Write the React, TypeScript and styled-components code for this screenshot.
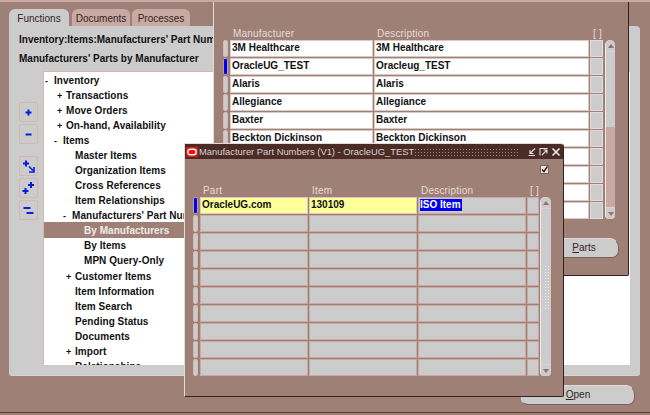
import { Fragment } from "react";
import styled, { createGlobalStyle } from "styled-components";

const BROWN = "#9f8077";
const PINK = "#c9a9a3";
const GREY = "#cccccc";

const GlobalStyle = createGlobalStyle`
  html, body { margin: 0; padding: 0; background: ${BROWN}; }
  body { font-family: "Liberation Sans", Arial, sans-serif; font-size: 10px; overflow: hidden; }
`;

const Desktop = styled.div`
  position: relative;
  width: 650px;
  height: 413px;
  overflow: hidden;
  background: ${BROWN};
  border-top: 2px solid ${PINK};
  border-bottom: 1px solid #5a3f3a;
  box-sizing: border-box;
`;

/* windows on the desktop */
const Navigator = styled.div`
  position: absolute;
  left: 9px;
  top: 7px;
  width: 631px;
  display: flex;
  flex-direction: column;
`;

const Tabs = styled.div`
  display: flex;
  gap: 2px;
  height: 17px;
`;

const Tab = styled.div<{ $active?: boolean }>`
  width: ${({ $active }) => ($active ? "60px" : "58px")};
  margin-right: ${({ $active }) => ($active ? "1px" : "0")};
  background: ${({ $active }) => ($active ? GREY : PINK)};
  border-radius: 6px 6px 0 0;
  color: #332522;
  line-height: 19px;
  text-align: center;
`;

const Panel = styled.div`
  height: 350px;
  background: ${GREY};
  border-bottom: 1px solid #dcd0cd;
  border-radius: 0 4px 3px 3px;
  box-sizing: border-box;
  padding: 4px 10px 10px 10px;
  display: flex;
  flex-direction: column;
`;

const Heading = styled.div`
  width: 194px;
  overflow: hidden;
  font-weight: bold;
  line-height: 19px;
  height: 19px;
  color: #111;
  white-space: nowrap;
`;

const PanelBody = styled.div`
  display: flex;
  margin-top: 3px;
  flex: 1;
  min-height: 0;
`;

const Tools = styled.div`
  width: 24px;
  display: flex;
  flex-direction: column;
  padding-top: 31px;
`;

const ToolButton = styled.div<{ $gap?: number }>`
  width: 19px;
  height: 20px;
  margin-top: ${({ $gap }) => $gap ?? 2}px;
  box-sizing: border-box;
  border: 1px solid #d3b9b4;
  border-radius: 2px;
  display: flex;
  align-items: center;
  justify-content: center;
`;

const Tree = styled.div`
  width: 587px;
  height: 294px;
  background: #fff;
  border-left: 1px solid #d3b9b4;
  border-top: 1px solid #d3b9b4;
  box-sizing: border-box;
  overflow: hidden;
  padding-top: 1px;
`;

const TreeRow = styled.div<{ $indent: number; $selected?: boolean; $push?: boolean }>`
  width: 140px;
  height: 15px;
  line-height: 15px;
  margin-top: ${({ $push }) => ($push ? "1px" : "0")};
  padding-left: ${({ $indent }) => $indent}px;
  font-weight: bold;
  letter-spacing: 0.05px;
  white-space: nowrap;
  overflow: hidden;
  color: ${({ $selected }) => ($selected ? "#f2ece9" : "#111")};
  background: ${({ $selected }) => ($selected ? BROWN : "transparent")};
  box-shadow: ${({ $selected }) => ($selected ? `0 -1px 0 ${BROWN}` : "none")};
`;

const TreeMark = styled.span`
  display: inline-block;
  width: 9px;
  margin-left: -9px;
  font-size: 9px;
`;

const Footer = styled.div<{ $pad: string }>`
  display: flex;
  justify-content: flex-end;
  padding: ${({ $pad }) => $pad};
`;

const PushButton = styled.div<{ $width: number }>`
  width: ${({ $width }) => $width}px;
  height: 20px;
  box-sizing: border-box;
  background: ${GREY};
  border-top: 1px solid #e2d8d5;
  border-left: 1px solid #e2d8d5;
  border-right: 1px solid #7c605a;
  border-bottom: 1px solid #7c605a;
  border-radius: 5px 9px 7px 7px;
  color: #332522;
  line-height: 18px;
  text-align: center;
  u { text-decoration: underline; }
`;

const Window = styled.div<{ $left: number; $top: number; $width: number; $height: number; $raised?: boolean }>`
  position: absolute;
  left: ${({ $left }) => $left}px;
  top: ${({ $top }) => $top}px;
  width: ${({ $width }) => $width}px;
  height: ${({ $height }) => $height}px;
  box-sizing: border-box;
  background: ${BROWN};
  border-top: ${({ $raised }) => ($raised ? "1px solid #e4dbd8" : "none")};
  border-left: 1px solid #e4dbd8;
  border-right: 1px solid #33221f;
  border-bottom: 1px solid #33221f;
  border-radius: ${({ $raised }) => ($raised ? "0 4px 2px 0" : "0 0 2px 0")};
  display: flex;
  flex-direction: column;
`;

const RedSliver = styled.div`
  position: absolute;
  left: 2px;
  top: -2px;
  width: 12px;
  height: 2px;
  background: #e81a12;
`;

const MainBody = styled.div`
  padding: 26px 0 0 9px;
  display: flex;
  flex-direction: column;
`;

const PopupBody = styled.div`
  padding: 6px 0 0 8px;
  display: flex;
  flex-direction: column;
`;

const HeaderRow = styled.div<{ $columns: string }>`
  display: grid;
  grid-template-columns: ${({ $columns }) => $columns};
  column-gap: 1px;
  height: 12px;
  line-height: 12px;
  color: #e6dcd9;
  letter-spacing: 0.2px;
`;

const HeaderCell = styled.div`
  padding-left: 3px;
  white-space: nowrap;
`;

const TableWrap = styled.div`
  display: flex;
  align-items: stretch;
`;

const Table = styled.div<{ $columns: string }>`
  display: grid;
  grid-template-columns: ${({ $columns }) => $columns};
  grid-auto-rows: 17px;
  gap: 1px;
`;

const Indicator = styled.div<{ $on?: boolean }>`
  margin: 0 1px 0 0;
  border: 1px solid ${({ $on }) => ($on ? "#b89c96" : "#d3b9b4")};
  background: ${({ $on }) => ($on ? "#0000f0" : GREY)};
  border-radius: 2px;
`;

const Cell = styled.div<{ $fill?: string; $edge?: string }>`
  box-sizing: border-box;
  background: ${({ $fill }) => $fill ?? "#fff"};
  border: 1px solid ${({ $edge }) => $edge ?? "#dbc9c5"};
  padding-left: 1px;
  font-weight: bold;
  line-height: 14px;
  color: #111;
  white-space: nowrap;
  overflow: hidden;
`;

const Highlighted = styled.span`
  display: inline-block;
  background: #0000f0;
  color: #fff;
  padding-right: 1px;
  line-height: 12px;
`;

const ScrollBar = styled.div<{ $left: number; $width: number }>`
  position: relative;
  margin-left: ${({ $left }) => $left}px;
  width: ${({ $width }) => $width}px;
  box-sizing: border-box;
  border-left: 1px solid #f0ebe9;
  background: ${GREY};
  border-radius: 5px 5px 4px 4px;
  display: flex;
  flex-direction: column;
  align-items: center;
  justify-content: space-between;
  overflow: hidden;
`;

const ScrollEnd = styled.div<{ $bottom?: boolean }>`
  width: 100%;
  height: 11px;
  flex: none;
  background: ${GREY};
  border-${({ $bottom }) => ($bottom ? "top" : "bottom")}: 1px solid #dcd2cf;
  display: flex;
  align-items: center;
  justify-content: center;
  &::before {
    content: "";
    border-left: 3px solid transparent;
    border-right: 3px solid transparent;
    border-${({ $bottom }) => ($bottom ? "top" : "bottom")}: 4px solid #8f736c;
  }
`;

const ScrollTrack = styled.div<{ $tall: number }>`
  width: 100%;
  height: ${({ $tall }) => $tall}px;
  flex: none;
`;

const ScrollRest = styled.div`
  flex: 1;
  width: 100%;
  background: ${PINK};
`;

const Grip = styled.div`
  flex: 1;
  width: 100%;
  display: flex;
  align-items: center;
  justify-content: center;
  &::before {
    content: "";
    width: 5px;
    height: 44px;
    background-image: radial-gradient(circle, #f2eeed 0.8px, transparent 1px);
    background-size: 3px 3px;
  }
`;

const TitleBar = styled.div`
  height: 15px;
  flex: none;
  background: #4a2c27;
  border-radius: 0 3px 0 0;
  display: flex;
  align-items: center;
  padding: 0 2px 0 1px;
  font-size: 9.4px;
  color: #dcd0cd;
  white-space: nowrap;
`;

const TitleText = styled.span`
  margin-left: 1px;
  width: 215px;
  overflow: hidden;
`;

const TitleDots = styled.div`
  width: 104px;
  height: 8px;
  background-image: radial-gradient(circle, #9c857f 0.7px, transparent 0.9px);
  background-size: 3px 3px;
`;

const TitleButtons = styled.div`
  display: flex;
  gap: 2px;
  margin-left: 9px;
`;

const CheckRow = styled.div`
  display: flex;
  justify-content: flex-end;
  height: 9px;
  padding-right: 14px;
  margin-bottom: 11px;
`;

const CheckBox = styled.div`
  width: 9px;
  height: 9px;
  background: #ece6e4;
  border: 1px solid #7c605a;
  box-sizing: border-box;
  display: flex;
`;

const OracleMark = () => (
  <svg width="12" height="10" viewBox="0 0 12 10">
    <rect width="12" height="10" fill="#e8130e" />
    <rect x="1.7" y="2.3" width="8.6" height="5.4" rx="2.7" fill="none" stroke="#fff" strokeWidth="1.4" />
  </svg>
);

const Plus = ({ x, y, s = 3 }: { x: number; y: number; s?: number }) => (
  <path d={`M${x - s} ${y}H${x + s}M${x} ${y - s}V${y + s}`} stroke="#0a1be0" strokeWidth="2" fill="none" />
);

const Minus = ({ x, y, s = 3 }: { x: number; y: number; s?: number }) => (
  <path d={`M${x - s} ${y}H${x + s}`} stroke="#0a1be0" strokeWidth="2" fill="none" />
);

const ToolIcon = ({ kind }: { kind: string }) => (
  <svg width="15" height="15" viewBox="0 0 15 15">
    {kind === "expand" && <Plus x={7.5} y={7.5} />}
    {kind === "collapse" && <Minus x={7.5} y={7.5} />}
    {kind === "branch" && (
      <>
        <Plus x={5} y={4.5} />
        <path d="M8 7.5L12 11.5M13 8V13H8" stroke="#0a1be0" strokeWidth="1.6" fill="none" />
      </>
    )}
    {kind === "all" && (
      <>
        <Plus x={10} y={4} />
        <Plus x={4.5} y={10} />
      </>
    )}
    {kind === "none" && (
      <>
        <Minus x={6} y={5} s={3.5} />
        <Minus x={9} y={10} s={3.5} />
      </>
    )}
  </svg>
);

const MinimizeIcon = () => (
  <svg width="10" height="10" viewBox="0 0 10 10" fill="none" stroke="#e6dcd9" strokeWidth="1.1">
    <path d="M8 1.5L3.5 6M1.5 8.5H8M3 3V6.5H6.5" />
  </svg>
);

const MaximizeIcon = () => (
  <svg width="10" height="10" viewBox="0 0 10 10" fill="none" stroke="#e6dcd9" strokeWidth="1.1">
    <path d="M1 8.5V1.5H8.5M3 8L8 3M4.5 3H8V6.5" />
  </svg>
);

const CloseIcon = () => (
  <svg width="10" height="10" viewBox="0 0 10 10" fill="none" stroke="#f2ecea" strokeWidth="1.6">
    <path d="M1.5 1.5L8.5 8.5M8.5 1.5L1.5 8.5" />
  </svg>
);

const treeItems: { label: string; indent: number; mark?: string; selected?: boolean; push?: boolean }[] = [
  { label: "Inventory", indent: 10, mark: "-" },
  { label: "Transactions", indent: 22, mark: "+" },
  { label: "Move Orders", indent: 22, mark: "+" },
  { label: "On-hand, Availability", indent: 22, mark: "+" },
  { label: "Items", indent: 19, mark: "-" },
  { label: "Master Items", indent: 31 },
  { label: "Organization Items", indent: 31 },
  { label: "Cross References", indent: 31 },
  { label: "Item Relationships", indent: 31 },
  { label: "Manufacturers' Part Numbers", indent: 28, mark: "-" },
  { label: "By Manufacturers", indent: 40, selected: true },
  { label: "By Items", indent: 40 },
  { label: "MPN Query-Only", indent: 40 },
  { label: "Customer Items", indent: 31, mark: "+", push: true },
  { label: "Item Information", indent: 31 },
  { label: "Item Search", indent: 31 },
  { label: "Pending Status", indent: 31 },
  { label: "Documents", indent: 31 },
  { label: "Import", indent: 31, mark: "+" },
  { label: "Relationships", indent: 31 },
];

const manufacturers = [
  ["3M Healthcare", "3M Healthcare"],
  ["OracleUG_TEST", "Oracleug_TEST"],
  ["Alaris", "Alaris"],
  ["Allegiance", "Allegiance"],
  ["Baxter", "Baxter"],
  ["Beckton Dickinson", "Beckton Dickinson"],
  ["", ""],
  ["", ""],
  ["", ""],
  ["", ""],
];

const MAIN_COLUMNS = "6px 143px 215px 13px";
const PART_COLUMNS = "6px 108px 108px 108px 12px";

export default function App() {
  return (
    <Desktop>
      <GlobalStyle />
      <Navigator>
        <Tabs>
          <Tab $active>Functions</Tab>
          <Tab>Documents</Tab>
          <Tab>Processes</Tab>
        </Tabs>
        <Panel>
          <Heading>Inventory:Items:Manufacturers' Part Numbers</Heading>
          <Heading>Manufacturers' Parts by Manufacturer</Heading>
          <PanelBody>
            <Tools>
              <ToolButton $gap={0}><ToolIcon kind="expand" /></ToolButton>
              <ToolButton><ToolIcon kind="collapse" /></ToolButton>
              <ToolButton $gap={12}><ToolIcon kind="branch" /></ToolButton>
              <ToolButton><ToolIcon kind="all" /></ToolButton>
              <ToolButton><ToolIcon kind="none" /></ToolButton>
            </Tools>
            <Tree>
              {treeItems.map((item) => (
                <TreeRow key={item.label} $indent={item.indent} $selected={item.selected} $push={item.push}>
                  {item.mark && <TreeMark>{item.mark}</TreeMark>}
                  {item.label}
                </TreeRow>
              ))}
            </Tree>
          </PanelBody>
        </Panel>
        <Footer $pad="9px 5px 0 0">
          <PushButton $width={114}><u>O</u>pen</PushButton>
        </Footer>
      </Navigator>

      <Window $left={213} $top={0} $width={416} $height={274}>
        <RedSliver />
        <MainBody>
          <HeaderRow $columns={MAIN_COLUMNS}>
            <span />
            <HeaderCell>Manufacturer</HeaderCell>
            <HeaderCell>Description</HeaderCell>
            <HeaderCell>[ ]</HeaderCell>
          </HeaderRow>
          <TableWrap>
            <Table $columns={MAIN_COLUMNS}>
              {manufacturers.map(([name, desc], i) => (
                <Fragment key={i}>
                  <Indicator $on={i === 1} />
                  <Cell>{name}</Cell>
                  <Cell>{desc}</Cell>
                  <Cell $fill={GREY} $edge="#e4dbd8" />
                </Fragment>
              ))}
            </Table>
            <ScrollBar $left={2} $width={10}>
              <ScrollEnd />
              <ScrollTrack $tall={75} />
              <ScrollRest />
              <ScrollEnd $bottom />
            </ScrollBar>
          </TableWrap>
        </MainBody>
        <Footer $pad="19px 9px 0 0">
          <PushButton $width={70}><u>P</u>arts</PushButton>
        </Footer>
      </Window>

      <Window $left={184} $top={141} $width={380} $height={254} $raised>
        <TitleBar>
          <OracleMark />
          <TitleText>Manufacturer Part Numbers (V1) - OracleUG_TEST</TitleText>
          <TitleDots />
          <TitleButtons>
            <MinimizeIcon />
            <MaximizeIcon />
            <CloseIcon />
          </TitleButtons>
        </TitleBar>
        <PopupBody>
          <CheckRow>
            <CheckBox>
              <svg width="7" height="7" viewBox="0 0 7 7" fill="none" stroke="#2a1a18" strokeWidth="1.5">
                <path d="M1 3.5L3 5.5L6.5 0.5" />
              </svg>
            </CheckBox>
          </CheckRow>
          <HeaderRow $columns={PART_COLUMNS}>
            <span />
            <HeaderCell>Part</HeaderCell>
            <HeaderCell>Item</HeaderCell>
            <HeaderCell>Description</HeaderCell>
            <HeaderCell>[ ]</HeaderCell>
          </HeaderRow>
          <TableWrap>
            <Table $columns={PART_COLUMNS}>
              {Array.from({ length: 10 }, (_, i) => (
                <Fragment key={i}>
                  <Indicator $on={i === 0} />
                  <Cell $fill={i === 0 ? "#ffff99" : GREY} $edge={i === 0 ? "#dbc9c5" : PINK}>{i === 0 && "OracleUG.com"}</Cell>
                  <Cell $fill={i === 0 ? "#ffff99" : GREY} $edge={i === 0 ? "#dbc9c5" : PINK}>{i === 0 && "130109"}</Cell>
                  <Cell $fill={GREY} $edge={PINK}>{i === 0 && <Highlighted>ISO Item</Highlighted>}</Cell>
                  <Cell $fill={GREY} $edge={PINK} />
                </Fragment>
              ))}
            </Table>
            <ScrollBar $left={1} $width={11}>
              <ScrollEnd />
              <Grip />
              <ScrollEnd $bottom />
            </ScrollBar>
          </TableWrap>
        </PopupBody>
      </Window>
    </Desktop>
  );
}
